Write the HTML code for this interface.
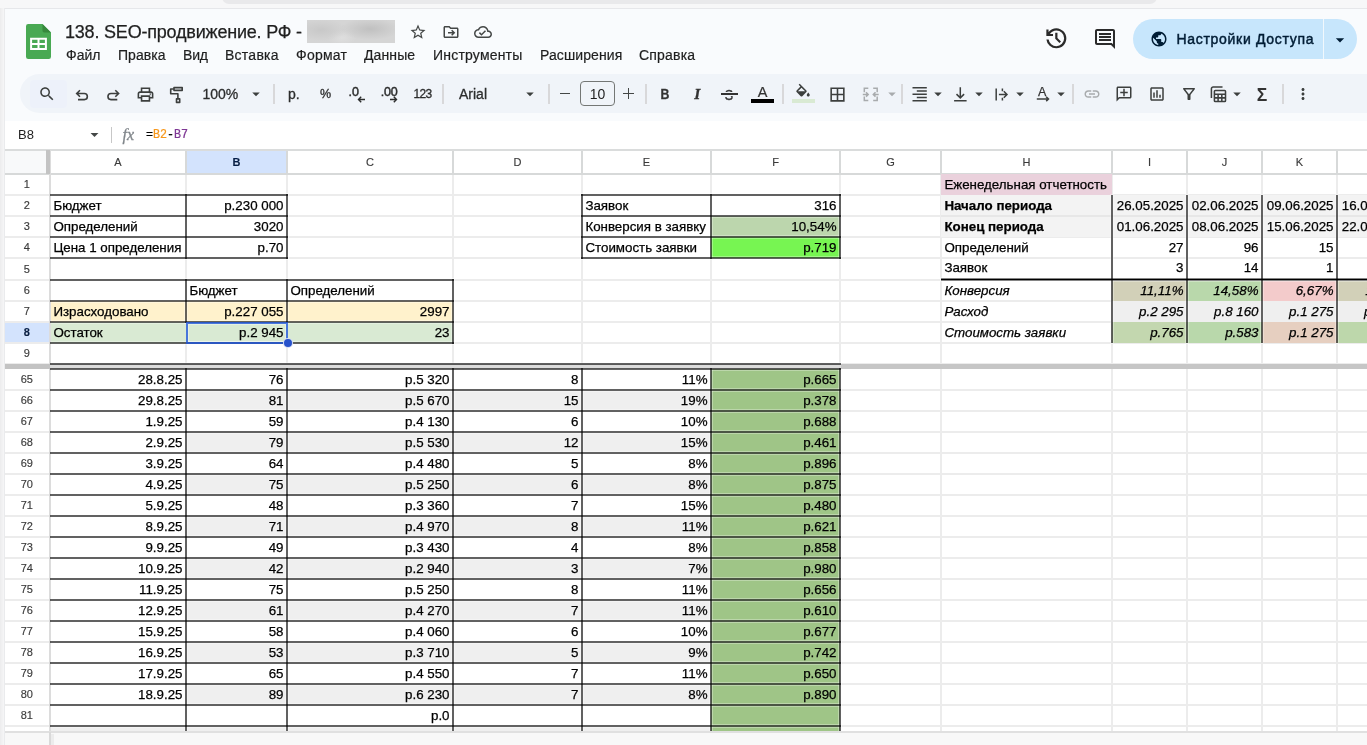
<!DOCTYPE html>
<html lang="ru"><head><meta charset="utf-8"><title>138. SEO-продвижение. РФ</title>
<style>
html,body{margin:0;padding:0}
body{width:1367px;height:745px;overflow:hidden;position:relative;background:#f9fbfd;font-family:"Liberation Sans",sans-serif;color:#000}
#grid{position:absolute;left:0;top:0;width:1367px;height:745px;overflow:hidden;font-size:13.333px;will-change:transform}
.f{position:absolute;display:block}
.t{position:absolute;white-space:nowrap;box-sizing:border-box;padding:0 3px;overflow:hidden;-webkit-text-stroke:.25px}
.t.l{text-align:left;padding-left:3.400px}.t.r{text-align:right;padding-right:3.500px}.t.c{text-align:center;padding:0}
.t.h{font-size:11px;color:#3a3a3a;-webkit-text-stroke:.15px #3a3a3a}
.t.hs{font-weight:bold;color:#041e49}
.t.b{font-weight:bold}.t.it{font-style:italic}
.sel{position:absolute;border:2px solid rgba(30,84,220,.78);box-shadow:inset 0 0 0 1px rgba(255,255,255,.35)}
.dot{position:absolute;width:8px;height:8px;border-radius:50%;background:#2752cb;border:1px solid rgba(255,255,255,.8)}
#strip{position:absolute;left:0;top:0;width:1367px;height:8px;background:#f7f7f8}
#pill{position:absolute;left:222px;top:-10px;width:935px;height:14px;border-radius:7px;background:#e9e9eb}
#stripline{position:absolute;left:4px;top:8px;width:1363px;height:1px;background:#e6e7ea}
#leftshade{position:absolute;left:0;top:8px;width:4px;height:737px;background:linear-gradient(90deg,#ececed,#f6f6f7);border-right:1px solid #eaebed}
#logo{position:absolute;left:26px;top:24px}
#title{position:absolute;left:65px;top:20px;height:24px;line-height:24px;font-size:18px;color:#1f1f1f;white-space:nowrap;letter-spacing:-.2px;-webkit-text-stroke:.25px #1f1f1f}
#blur{position:absolute;left:307px;top:20px;width:88px;height:23px;background:radial-gradient(ellipse 26px 11px at 14px 10px,#c8c8c8,rgba(200,200,200,0) 100%),radial-gradient(ellipse 30px 11px at 63px 9px,#c0c0c0,rgba(192,192,192,0) 100%),radial-gradient(ellipse 14px 8px at 35px 18px,#dedede,rgba(222,222,222,0) 100%),#d5d5d5}
.ic{position:absolute;display:block}
#menu span{position:absolute;top:44.500px;height:20px;line-height:20px;font-size:14px;color:#1f1f1f;white-space:nowrap;-webkit-text-stroke:.2px #1f1f1f}
#share{position:absolute;left:1133px;top:18.500px;width:224px;height:40px;border-radius:20px;background:#c7e6fc}
#sharetxt{position:absolute;left:43.500px;top:0;line-height:40px;font-size:14px;color:#001d35;white-space:nowrap;letter-spacing:.7px;-webkit-text-stroke:.45px #001d35}
#sharediv{position:absolute;left:190px;top:0;width:1px;height:40px;background:#f1f8fd}
#toolbar{position:absolute;left:20px;top:74px;width:1400px;height:39px;border-radius:20px;background:#f0f4f9}
#fbar{position:absolute;left:5px;top:121px;width:1362px;height:29px;background:#fff}
#namebox{position:absolute;left:13px;top:-1px;line-height:29px;font-size:13px;color:#1f1f1f}
#fsep{position:absolute;left:106px;top:6px;width:1px;height:16px;background:#c7c7c7}
#fx{position:absolute;left:117.500px;top:-1px;line-height:29px;font-size:16px;font-style:italic;font-family:"Liberation Serif",serif;color:#80868b;-webkit-text-stroke:.3px #80868b}
#formula{position:absolute;left:141px;top:-1px;line-height:30px;font-size:11.700px;transform:scaleY(1.150);-webkit-text-stroke:.2px;color:#000;font-family:"Liberation Mono","Liberation Sans",monospace}
#formula b{font-weight:normal}
#tbi{position:absolute;left:0;top:0;width:1367px;height:115px;will-change:transform}
#menu,#title,#share,#fbar{will-change:transform}
.tb{position:absolute;top:82px;height:24px;line-height:24px;color:#2c2d2d;white-space:nowrap;-webkit-text-stroke:.3px #2c2d2d}
#fsz{position:absolute;left:580px;top:81px;width:33px;height:23px;border:1px solid #747775;border-radius:4px;text-align:center;line-height:24px;font-size:14px;color:#1f1f1f}
#txt{position:absolute;left:0;top:0;width:1367px;height:732px;overflow:hidden;will-change:transform}
.gl{position:absolute;width:24px;height:24px;line-height:24px;text-align:center;color:#333;white-space:nowrap}

</style></head><body>
<div id="strip"></div><div id="pill"></div><div id="stripline"></div><div id="leftshade"></div>
<svg id="logo" viewBox="0 0 25 35" width="25" height="35"><path d="M2.200 0H16.500L25 8.500V32.800a2.200 2.200 0 0 1-2.200 2.200H2.200A2.200 2.200 0 0 1 0 32.800V2.200A2.200 2.200 0 0 1 2.200 0z" fill="#49a953"/><path d="M16.500 0L25 8.500H18.200a1.700 1.700 0 0 1-1.700-1.700z" fill="#37883d"/><path d="M4.100 13.800v12.100h16.800V13.800zm2 2h5.400v3.100H6.100zm7.400 0h5.400v3.100h-5.400zm-7.400 5.100h5.400v3h-5.400zm7.400 0h5.400v3h-5.400z" fill="#fff"/></svg>
<div id="title">138. SEO-продвижение. РФ -</div>
<div id="blur"></div>
<svg class="ic" style="left:409.400px;top:22.700px" width="18" height="18" viewBox="0 0 24 24"><path fill="#444746" d="M22 9.240l-7.190-.620L12 2 9.190 8.630 2 9.240l5.460 4.730L5.820 21 12 17.270 18.180 21l-1.630-7.030L22 9.240zM12 15.400l-3.760 2.270 1-4.280-3.320-2.880 4.380-.380L12 6.100l1.710 4.040 4.380.380-3.320 2.880 1 4.280L12 15.400z"/></svg>
<svg class="ic" style="left:441.600px;top:23px" width="18" height="18" viewBox="0 0 24 24"><path fill="#444746" d="M20 6h-8l-2-2H4c-1.100 0-2 .900-2 2v12c0 1.100.900 2 2 2h16c1.100 0 2-.900 2-2V8c0-1.100-.900-2-2-2zm0 12H4V6h5.170l2 2H20v10zm-7.840-2.260l1.420 1.420L17.740 13l-4.160-4.160-1.420 1.420L13.910 12H8v2h5.910z"/></svg>
<svg class="ic" style="left:473.500px;top:23px" width="18" height="18" viewBox="0 0 24 24"><path fill="#444746" d="M19.350 10.040C18.670 6.590 15.640 4 12 4 9.110 4 6.600 5.640 5.350 8.040 2.340 8.360 0 10.910 0 14c0 3.310 2.690 6 6 6h13c2.760 0 5-2.240 5-5 0-2.640-2.050-4.780-4.650-4.960zM19 18H6c-2.210 0-4-1.790-4-4 0-2.050 1.530-3.760 3.560-3.970l1.070-.110.500-.950C8.080 7.140 9.940 6 12 6c2.620 0 4.880 1.860 5.390 4.430l.300 1.500 1.530.110c1.560.100 2.780 1.410 2.780 2.960 0 1.650-1.350 3-3 3zm-9-3.820l-2.090-2.090L6.500 13.500 10 17l6.010-6.010-1.410-1.410z"/></svg>
<div id="menu">
<span style="left:66px;letter-spacing:0px">Файл</span><span style="left:118px;letter-spacing:0.05px">Правка</span><span style="left:183px;letter-spacing:-0.2px">Вид</span><span style="left:225px;letter-spacing:0.25px">Вставка</span><span style="left:296px;letter-spacing:0.25px">Формат</span><span style="left:364px;letter-spacing:0.1px">Данные</span><span style="left:433px;letter-spacing:0.2px">Инструменты</span><span style="left:540px;letter-spacing:0.1px">Расширения</span><span style="left:639px;letter-spacing:0.2px">Справка</span>
</div>
<svg class="ic" style="left:1042.700px;top:25px" width="26.700" height="26.700" viewBox="0 0 24 24"><path fill="#2b2b2b" d="M12 21q-3.450 0-6.012-2.287T3.050 13H5.100q.350 2.600 2.313 4.300T12 19q2.925 0 4.963-2.037T19 12t-2.037-4.963T12 5q-1.725 0-3.225.800T6.250 8H9v2H3V4h2v2.350q1.275-1.600 3.113-2.475T12 3q1.875 0 3.513.713t2.850 1.924 1.925 2.850T21 12t-.712 3.513-1.925 2.850-2.850 1.925T12 21m2.800-4.800L11 12.400V7h2v4.600l3.200 3.200z"/></svg>
<svg class="ic" style="left:1093.400px;top:27px" width="24" height="24" viewBox="0 0 24 24"><path fill="#2b2b2b" d="M21.990 4c0-1.100-.890-2-1.990-2H4c-1.100 0-2 .900-2 2v12c0 1.100.900 2 2 2h14l4 4-.010-18zM20 4v13.170L18.830 16H4V4h16zM6 12h12v2H6zm0-3h12v2H6zm0-3h12v2H6z"/></svg>
<div id="share"><svg style="position:absolute;left:17px;top:11px" width="18" height="18" viewBox="0 0 24 24"><path fill="#001d35" d="M12 2C6.480 2 2 6.480 2 12s4.480 10 10 10 10-4.480 10-10S17.520 2 12 2zm-1 17.930c-3.950-.490-7-3.850-7-7.930 0-.620.080-1.210.210-1.790L9 15v1c0 1.100.900 2 2 2v1.930zm6.900-2.540c-.260-.810-1-1.390-1.900-1.390h-1v-3c0-.550-.450-1-1-1H8v-2h2c.550 0 1-.450 1-1V7h2c1.100 0 2-.900 2-2v-.410c2.930 1.190 5 4.060 5 7.410 0 2.080-.800 3.970-2.100 5.390z"/></svg><span id="sharetxt">Настройки Доступа</span><i id="sharediv"></i><svg style="position:absolute;left:197px;top:10.500px" width="20" height="20" viewBox="0 0 24 24"><path fill="#001d35" d="M7 10l5 5 5-5z"/></svg></div>
<div id="toolbar"></div>
<div id="fbar"><span id="namebox">B8</span><svg style="position:absolute;left:80px;top:4px" width="19" height="19" viewBox="0 0 24 24"><path fill="#444746" d="M7 10l5 5 5-5z"/></svg><i id="fsep"></i><span id="fx">fx</span><span id="formula">=<b style="color:#f7981d">B2</b>-<b style="color:#7e3794">B7</b></span></div>
<div id="tbi">
<i class="f" style="left:30px;top:80px;width:37px;height:28px;border-radius:4px;background:#edf1fa"></i>
<svg class="ic" style="left:38.3px;top:85px" width="18" height="18" viewBox="0 0 24 24"><path fill="#3c3f3e" d="M15.500 14h-.790l-.280-.270C15.410 12.590 16 11.110 16 9.500 16 5.910 13.090 3 9.500 3S3 5.910 3 9.500 5.910 16 9.500 16c1.610 0 3.090-.590 4.230-1.570l.270.280v.790l5 4.990L20.490 19l-4.990-5zm-6 0C7.010 14 5 11.990 5 9.500S7.010 5 9.500 5 14 7.010 14 9.500 11.990 14 9.500 14z"/></svg>
<svg class="ic" style="left:72px;top:84px" width="20" height="20" viewBox="72 84 20 20"><path fill="none" stroke="#3c3f3e" stroke-width="1.600" d="M80 90.300L76.700 93.500 80 96.700M76.900 93.500H84.300a3.050 3.050 0 0 1 0 6.100H78"/></svg>
<svg class="ic" style="left:103px;top:84px" width="20" height="20" viewBox="103 84 20 20"><path fill="none" stroke="#3c3f3e" stroke-width="1.600" d="M115.300 90.300L118.600 93.500 115.300 96.700M118.400 93.500H111a3.050 3.050 0 0 0 0 6.100H117.300"/></svg>
<svg class="ic" style="left:135.8px;top:84.7px" width="19" height="19" viewBox="0 0 24 24"><path fill="#3c3f3e" d="M19 8h-1V3H6v5H5c-1.660 0-3 1.340-3 3v6h4v4h12v-4h4v-6c0-1.660-1.340-3-3-3zM8 5h8v3H8V5zm8 14H8v-4h8v4zm4-4h-2v-2H6v2H4v-4c0-.550.450-1 1-1h14c.550 0 1 .450 1 1v4z"/><circle cx="18" cy="11.500" r="1" fill="#444746"/></svg>
<svg class="ic" style="left:166px;top:84px" width="22" height="22" viewBox="166 84 22 22"><path fill="none" stroke="#3c3f3e" stroke-width="1.600" stroke-linejoin="round" d="M174 87.600h8.200v2.800H174zM174 89H170.700v4.700H177.900V98.800M176.500 98.900h3.200v3.500h-3.200z"/></svg>
<span class="tb" style="left:202.500px;font-size:14px">100%</span>
<svg class="ic" style="left:247px;top:85.4px" width="18" height="18" viewBox="0 0 24 24"><path fill="#3c3f3e" d="M7 10l5 5 5-5z"/></svg>
<i class="f" style="left:273px;top:84px;width:2px;height:20px;background:#d8d8da"></i>
<span class="tb" style="left:288px;font-size:14px">р.</span>
<span class="tb" style="left:320px;font-size:12.500px">%</span>
<span class="tb" style="left:348.500px;font-size:12.500px;top:79.500px;-webkit-text-stroke:.45px #2c2d2d">.0</span>
<svg class="ic" style="left:357.3px;top:94.9px" width="9" height="9" viewBox="0 0 9 9"><path fill="none" stroke="#2c2d2d" stroke-width="1.4"  d="M8 4.500H1.500M4.200 1.800L1.500 4.500 4.200 7.200"/></svg>
<span class="tb" style="left:380.700px;font-size:12.500px;top:79.500px;-webkit-text-stroke:.45px #2c2d2d;letter-spacing:-.2px">.00</span>
<svg class="ic" style="left:388.7px;top:94.9px" width="9" height="9" viewBox="0 0 9 9"><path fill="none" stroke="#2c2d2d" stroke-width="1.4"  d="M1 4.500H7.500M4.800 1.800l2.700 2.700L4.800 7.200"/></svg>
<span class="tb" style="left:413.500px;font-size:12px;top:81.500px;letter-spacing:-.65px">123</span>
<i class="f" style="left:442px;top:84px;width:2px;height:20px;background:#d8d8da"></i>
<span class="tb" style="left:459px;font-size:14px">Arial</span>
<svg class="ic" style="left:520.5px;top:84.5px" width="18" height="18" viewBox="0 0 24 24"><path fill="#3c3f3e" d="M7 10l5 5 5-5z"/></svg>
<i class="f" style="left:548px;top:84px;width:2px;height:20px;background:#d8d8da"></i>
<i class="f" style="left:560px;top:92.500px;width:10px;height:1.500px;background:#444746"></i>
<div id="fsz">10</div>
<i class="f" style="left:623px;top:92.500px;width:11px;height:1.500px;background:#444746"></i><i class="f" style="left:627.700px;top:88px;width:1.500px;height:11px;background:#444746"></i>
<i class="f" style="left:645px;top:84px;width:2px;height:20px;background:#d8d8da"></i>
<span class="gl" style="left:653.4px;top:82.3px;font-size:15px;font-weight:bold;transform:scaleX(.82);-webkit-text-stroke:.3px #333">B</span>
<span class="gl" style="left:685.4px;top:82.3px;font-size:15.5px;font-family:Liberation Serif,serif;font-style:italic;font-weight:bold;-webkit-text-stroke:.3px #333">I</span>
<span class="gl" style="left:717.2px;top:82.6px;font-size:15px;transform:scaleX(.84);-webkit-text-stroke:.35px #333">S</span>
<i class="f" style="left:721px;top:93.300px;width:16.500px;height:1.300px;background:#333"></i><i class="f" style="left:725px;top:92.400px;width:8.500px;height:1px;background:#f0f4f9"></i><i class="f" style="left:725px;top:95px;width:8.500px;height:1px;background:#f0f4f9"></i>
<span class="gl" style="left:750.5px;top:80.3px;font-size:14.5px;-webkit-text-stroke:.2px #333">A</span>
<i class="f" style="left:751px;top:99px;width:23px;height:4px;background:#000"></i>
<i class="f" style="left:782px;top:84px;width:2px;height:20px;background:#d8d8da"></i>
<svg class="ic" style="left:794px;top:82.5px" width="18" height="18" viewBox="0 0 24 24"><path fill="#3c3f3e" d="M16.560 9.940L7.620 1 6.210 2.410l2.380 2.380-5.150 5.150c-.590.590-.590 1.540 0 2.120l5.500 5.500c.290.290.680.440 1.060.440s.770-.150 1.060-.440l5.500-5.500c.590-.580.590-1.530 0-2.120zM5.210 11L10 6.210 14.790 11H5.210zM19 12.500s-2 2.170-2 3.500c0 1.100.900 2 2 2s2-.900 2-2c0-1.330-2-3.500-2-3.500z"/></svg>
<i class="f" style="left:792px;top:99px;width:23px;height:4px;background:#d9ead3"></i>
<svg class="ic" style="left:827.5px;top:84.95px" width="19" height="19" viewBox="0 0 24 24"><path fill="#3c3f3e" d="M3 3v18h18V3H3zm8 16H5v-6h6v6zm0-8H5V5h6v6zm8 8h-6v-6h6v6zm0-8h-6V5h6v6z"/></svg>
<svg class="ic" style="left:860px;top:84px" width="22" height="22" viewBox="860 84 22 22"><path fill="none" stroke="#a8abad" stroke-width="1.500" d="M864.300 92.300V88.300H868.300M873.200 88.300H877.200V92.300M877.200 96.600V100.600H873.200M868.300 100.600H864.300V96.600M862.800 94.450H868M866 92.250L868.200 94.450 866 96.650M878.700 94.450H873.500M875.500 92.250L873.300 94.450 875.500 96.650"/></svg>
<svg class="ic" style="left:882.5px;top:85.4px" width="18" height="18" viewBox="0 0 24 24"><path fill="#a8abad" d="M7 10l5 5 5-5z"/></svg>
<i class="f" style="left:901px;top:84px;width:2px;height:20px;background:#d8d8da"></i>
<svg class="ic" style="left:908px;top:84px" width="24" height="22" viewBox="908 84 24 22"><path fill="none" stroke="#3c3f3e" stroke-width="1.4"  d="M912.500 87.700H926.800M916.800 91H926.800M912.500 94.250H926.800M916.800 97.500H926.800M912.500 100.800H926.800"/></svg>
<svg class="ic" style="left:928.5px;top:84.5px" width="18" height="18" viewBox="0 0 24 24"><path fill="#3c3f3e" d="M7 10l5 5 5-5z"/></svg>
<svg class="ic" style="left:950px;top:84px" width="22" height="22" viewBox="950 84 22 22"><path fill="none" stroke="#3c3f3e" stroke-width="1.5"  d="M960.300 87.200V97.600M956.500 94.100L960.300 97.900 964.100 94.100M954.100 100.800H966.600"/></svg>
<svg class="ic" style="left:969.5px;top:84.5px" width="18" height="18" viewBox="0 0 24 24"><path fill="#3c3f3e" d="M7 10l5 5 5-5z"/></svg>
<svg class="ic" style="left:990px;top:84px" width="22" height="22" viewBox="990 84 22 22"><path fill="none" stroke="#3c3f3e" stroke-width="1.5"  d="M996.200 88.500V100.500M1002.400 88.500V91.200M1002.400 97.700V100.500M998.900 94.450H1006.500M1003.800 91.200L1007 94.450 1003.800 97.700"/></svg>
<svg class="ic" style="left:1010.5px;top:84.5px" width="18" height="18" viewBox="0 0 24 24"><path fill="#3c3f3e" d="M7 10l5 5 5-5z"/></svg>
<svg class="ic" style="left:1032px;top:84px" width="22" height="22" viewBox="1032 84 22 22"><path fill="none" stroke="#3c3f3e" stroke-width="1.5"  d="M1036.800 98.900H1048.200M1046.200 96.700L1048.500 98.900 1046.200 101.100"/></svg>
<span class="gl" style="left:1030.15px;top:80.1px;font-size:12.5px;-webkit-text-stroke:.25px #333">A</span>
<svg class="ic" style="left:1051.5px;top:84.5px" width="18" height="18" viewBox="0 0 24 24"><path fill="#3c3f3e" d="M7 10l5 5 5-5z"/></svg>
<i class="f" style="left:1072px;top:84px;width:2px;height:20px;background:#d8d8da"></i>
<svg class="ic" style="left:1083px;top:85.4px" width="18" height="18" viewBox="0 0 24 24"><path fill="#a8abad" d="M3.900 12c0-1.710 1.390-3.100 3.100-3.100h4V7H7c-2.760 0-5 2.240-5 5s2.240 5 5 5h4v-1.900H7c-1.710 0-3.100-1.390-3.100-3.100zM8 13h8v-2H8v2zm9-6h-4v1.900h4c1.710 0 3.100 1.390 3.100 3.100s-1.390 3.100-3.100 3.100h-4V17h4c2.760 0 5-2.240 5-5s-2.240-5-5-5z"/></svg>
<svg class="ic" style="left:1115px;top:85.4px" width="18" height="18" viewBox="0 0 24 24"><g transform="translate(24 0) scale(-1 1)"><path fill="#3c3f3e" d="M22 4c0-1.100-.900-2-2-2H4c-1.100 0-2 .900-2 2v12c0 1.100.900 2 2 2h14l4 4V4zm-2 13.170L18.830 16H4V4h16v13.170zM13 5h-2v4H7v2h4v4h2v-4h4V9h-4z"/></g></svg>
<svg class="ic" style="left:1147.5px;top:85.4px" width="18" height="18" viewBox="0 0 24 24"><path fill="#3c3f3e" d="M19 3H5c-1.100 0-2 .900-2 2v14c0 1.100.900 2 2 2h14c1.100 0 2-.900 2-2V5c0-1.100-.900-2-2-2zm0 16H5V5h14v14zM7 10h2v7H7zm4-3h2v10h-2zm4 6h2v4h-2z"/></svg>
<svg class="ic" style="left:1179.5px;top:85.4px" width="18" height="18" viewBox="0 0 24 24"><path fill="#3c3f3e" d="M7 6h10l-5.010 6.300L7 6zm-2.750-.390C6.270 8.200 10 13 10 13v6c0 .550.450 1 1 1h2c.550 0 1-.450 1-1v-6s3.720-4.800 5.740-7.390c.510-.660.040-1.610-.790-1.610H5.040c-.830 0-1.300.950-.790 1.610z"/></svg>
<svg class="ic" style="left:1207.85px;top:84.05px" width="20.5" height="20.5" viewBox="0 0 24 24"><path fill="none" stroke="#3c3f3e" stroke-width="1.8"  d="M8.500 7.500h11a1 1 0 0 1 1 1v11a1 1 0 0 1-1 1h-11a1 1 0 0 1-1-1v-11a1 1 0 0 1 1-1zM7.500 12h13M7.500 16.250h13M11.830 12v8.500M16.170 12v8.500"/><path fill="none" stroke="#3c3f3e" stroke-width="1.8"  d="M4 16.500V5.500a2 2 0 0 1 2-2H17"/></svg>
<svg class="ic" style="left:1227.5px;top:84.5px" width="18" height="18" viewBox="0 0 24 24"><path fill="#3c3f3e" d="M7 10l5 5 5-5z"/></svg>
<span class="gl" style="left:1250px;top:82.500px;font-size:17.500px;font-weight:bold">Σ</span>
<i class="f" style="left:1282px;top:84px;width:2px;height:20px;background:#d8d8da"></i>
<svg class="ic" style="left:1293.5px;top:85.4px" width="18" height="18" viewBox="0 0 24 24"><path fill="#3c3f3e" d="M12 8c1.100 0 2-.900 2-2s-.900-2-2-2-2 .900-2 2 .900 2 2 2zm0 2c-1.100 0-2 .900-2 2s.900 2 2 2 2-.900 2-2-.900-2-2-2zm0 6c-1.100 0-2 .900-2 2s.900 2 2 2 2-.900 2-2-.900-2-2-2z"/></svg>
</div>

<div id="grid">
<i class="f" style="left:5px;top:150px;width:1362px;height:582px;background:#fff"></i><i class="f" style="left:5px;top:150px;width:41px;height:24px;background:#f8f9fa"></i><i class="f" style="left:186px;top:150px;width:101px;height:24px;background:#d3e3fd"></i><i class="f" style="left:5px;top:322px;width:45px;height:21px;background:#d3e3fd"></i>
<i class="f" style="left:5px;top:194px;width:1362px;height:2px;background:#ececec"></i><i class="f" style="left:5px;top:215px;width:1362px;height:2px;background:#ececec"></i><i class="f" style="left:5px;top:236px;width:1362px;height:2px;background:#ececec"></i><i class="f" style="left:5px;top:257px;width:1362px;height:2px;background:#ececec"></i><i class="f" style="left:5px;top:279px;width:1362px;height:2px;background:#ececec"></i><i class="f" style="left:5px;top:300px;width:1362px;height:2px;background:#ececec"></i><i class="f" style="left:5px;top:321px;width:1362px;height:2px;background:#ececec"></i><i class="f" style="left:5px;top:342px;width:1362px;height:2px;background:#ececec"></i><i class="f" style="left:5px;top:363px;width:1362px;height:2px;background:#ececec"></i><i class="f" style="left:5px;top:389px;width:1362px;height:2px;background:#ececec"></i><i class="f" style="left:5px;top:410px;width:1362px;height:2px;background:#ececec"></i><i class="f" style="left:5px;top:431px;width:1362px;height:2px;background:#ececec"></i><i class="f" style="left:5px;top:452px;width:1362px;height:2px;background:#ececec"></i><i class="f" style="left:5px;top:473px;width:1362px;height:2px;background:#ececec"></i><i class="f" style="left:5px;top:494px;width:1362px;height:2px;background:#ececec"></i><i class="f" style="left:5px;top:515px;width:1362px;height:2px;background:#ececec"></i><i class="f" style="left:5px;top:536px;width:1362px;height:2px;background:#ececec"></i><i class="f" style="left:5px;top:557px;width:1362px;height:2px;background:#ececec"></i><i class="f" style="left:5px;top:578px;width:1362px;height:2px;background:#ececec"></i><i class="f" style="left:5px;top:599px;width:1362px;height:2px;background:#ececec"></i><i class="f" style="left:5px;top:620px;width:1362px;height:2px;background:#ececec"></i><i class="f" style="left:5px;top:641px;width:1362px;height:2px;background:#ececec"></i><i class="f" style="left:5px;top:662px;width:1362px;height:2px;background:#ececec"></i><i class="f" style="left:5px;top:683px;width:1362px;height:2px;background:#ececec"></i><i class="f" style="left:5px;top:704px;width:1362px;height:2px;background:#ececec"></i><i class="f" style="left:5px;top:725px;width:1362px;height:2px;background:#ececec"></i><i class="f" style="left:185px;top:174px;width:2px;height:558px;background:#ececec"></i><i class="f" style="left:286px;top:174px;width:2px;height:558px;background:#ececec"></i><i class="f" style="left:452px;top:174px;width:2px;height:558px;background:#ececec"></i><i class="f" style="left:581px;top:174px;width:2px;height:558px;background:#ececec"></i><i class="f" style="left:710px;top:174px;width:2px;height:558px;background:#ececec"></i><i class="f" style="left:839px;top:174px;width:2px;height:558px;background:#ececec"></i><i class="f" style="left:940px;top:174px;width:2px;height:558px;background:#ececec"></i><i class="f" style="left:1111px;top:174px;width:2px;height:558px;background:#ececec"></i><i class="f" style="left:1186px;top:174px;width:2px;height:558px;background:#ececec"></i><i class="f" style="left:1261px;top:174px;width:2px;height:558px;background:#ececec"></i><i class="f" style="left:1336px;top:174px;width:2px;height:558px;background:#ececec"></i><i class="f" style="left:185px;top:150px;width:2px;height:24px;background:#d7d9d9"></i><i class="f" style="left:286px;top:150px;width:2px;height:24px;background:#d7d9d9"></i><i class="f" style="left:452px;top:150px;width:2px;height:24px;background:#d7d9d9"></i><i class="f" style="left:581px;top:150px;width:2px;height:24px;background:#d7d9d9"></i><i class="f" style="left:710px;top:150px;width:2px;height:24px;background:#d7d9d9"></i><i class="f" style="left:839px;top:150px;width:2px;height:24px;background:#d7d9d9"></i><i class="f" style="left:940px;top:150px;width:2px;height:24px;background:#d7d9d9"></i><i class="f" style="left:1111px;top:150px;width:2px;height:24px;background:#d7d9d9"></i><i class="f" style="left:1186px;top:150px;width:2px;height:24px;background:#d7d9d9"></i><i class="f" style="left:1261px;top:150px;width:2px;height:24px;background:#d7d9d9"></i><i class="f" style="left:1336px;top:150px;width:2px;height:24px;background:#d7d9d9"></i><i class="f" style="left:5px;top:149px;width:1362px;height:2px;background:#dadcdc"></i><i class="f" style="left:5px;top:173px;width:1362px;height:2px;background:#d7d9d9"></i><i class="f" style="left:49px;top:150px;width:2px;height:595px;background:#dcdcdc"></i>
<i class="f" style="left:50px;top:301px;width:403px;height:21px;background:#fff2cc"></i><i class="f" style="left:50px;top:322px;width:403px;height:21px;background:#d9ead3"></i><i class="f" style="left:711px;top:216px;width:129px;height:21px;background:#bcd6ad"></i><i class="f" style="left:711px;top:237px;width:129px;height:21px;background:#77f552"></i><i class="f" style="left:941px;top:174px;width:171px;height:21px;background:#ead1dc"></i><i class="f" style="left:941px;top:195px;width:171px;height:21px;background:#f3f3f3"></i><i class="f" style="left:941px;top:216px;width:171px;height:21px;background:#f3f3f3"></i><i class="f" style="left:1112px;top:195px;width:300px;height:21px;background:#f3f3f3"></i><i class="f" style="left:1112px;top:216px;width:300px;height:21px;background:#f3f3f3"></i><i class="f" style="left:1112px;top:301px;width:300px;height:21px;background:#efefef"></i><i class="f" style="left:1112px;top:280px;width:75px;height:21px;background:#d2d0b8"></i><i class="f" style="left:1112px;top:322px;width:75px;height:21px;background:#c3d7af"></i><i class="f" style="left:1187px;top:280px;width:75px;height:21px;background:#b9d8ab"></i><i class="f" style="left:1187px;top:322px;width:75px;height:21px;background:#b9d8ab"></i><i class="f" style="left:1262px;top:280px;width:75px;height:21px;background:#f3cbcb"></i><i class="f" style="left:1262px;top:322px;width:75px;height:21px;background:#e6cfc0"></i><i class="f" style="left:1337px;top:280px;width:75px;height:21px;background:#d2d0b8"></i><i class="f" style="left:1337px;top:322px;width:75px;height:21px;background:#bdd7ab"></i><i class="f" style="left:186px;top:390px;width:525px;height:21px;background:#efefef"></i><i class="f" style="left:186px;top:432px;width:525px;height:21px;background:#efefef"></i><i class="f" style="left:186px;top:474px;width:525px;height:21px;background:#efefef"></i><i class="f" style="left:186px;top:516px;width:525px;height:21px;background:#efefef"></i><i class="f" style="left:186px;top:558px;width:525px;height:21px;background:#efefef"></i><i class="f" style="left:186px;top:600px;width:525px;height:21px;background:#efefef"></i><i class="f" style="left:186px;top:642px;width:525px;height:21px;background:#efefef"></i><i class="f" style="left:186px;top:684px;width:525px;height:21px;background:#efefef"></i><i class="f" style="left:186px;top:726px;width:525px;height:21px;background:#efefef"></i><i class="f" style="left:50px;top:726px;width:136px;height:21px;background:#efefef"></i><i class="f" style="left:711px;top:369px;width:129px;height:363px;background:#9fc587"></i><i class="f" style="left:941px;top:215px;width:426px;height:2px;background:#e7e7e7"></i>
<i class="f" style="left:49px;top:193px;width:240px;height:4px;background:rgba(255,255,255,.3)"></i><i class="f" style="left:49px;top:214px;width:240px;height:4px;background:rgba(255,255,255,.3)"></i><i class="f" style="left:49px;top:235px;width:240px;height:4px;background:rgba(255,255,255,.3)"></i><i class="f" style="left:49px;top:256px;width:240px;height:4px;background:rgba(255,255,255,.3)"></i><i class="f" style="left:184px;top:193px;width:4px;height:67px;background:rgba(255,255,255,.3)"></i><i class="f" style="left:285px;top:193px;width:4px;height:67px;background:rgba(255,255,255,.3)"></i><i class="f" style="left:580px;top:193px;width:262px;height:4px;background:rgba(255,255,255,.3)"></i><i class="f" style="left:580px;top:214px;width:262px;height:4px;background:rgba(255,255,255,.3)"></i><i class="f" style="left:580px;top:235px;width:262px;height:4px;background:rgba(255,255,255,.3)"></i><i class="f" style="left:580px;top:256px;width:262px;height:4px;background:rgba(255,255,255,.3)"></i><i class="f" style="left:580px;top:193px;width:4px;height:67px;background:rgba(255,255,255,.3)"></i><i class="f" style="left:709px;top:193px;width:4px;height:67px;background:rgba(255,255,255,.3)"></i><i class="f" style="left:838px;top:193px;width:4px;height:67px;background:rgba(255,255,255,.3)"></i><i class="f" style="left:49px;top:278px;width:406px;height:4px;background:rgba(255,255,255,.3)"></i><i class="f" style="left:49px;top:299px;width:406px;height:4px;background:rgba(255,255,255,.3)"></i><i class="f" style="left:49px;top:320px;width:406px;height:4px;background:rgba(255,255,255,.3)"></i><i class="f" style="left:49px;top:341px;width:406px;height:4px;background:rgba(255,255,255,.3)"></i><i class="f" style="left:451px;top:278px;width:4px;height:67px;background:rgba(255,255,255,.3)"></i><i class="f" style="left:184px;top:278px;width:4px;height:46px;background:rgba(255,255,255,.3)"></i><i class="f" style="left:285px;top:278px;width:4px;height:46px;background:rgba(255,255,255,.3)"></i><i class="f" style="left:940px;top:277px;width:428px;height:5px;background:rgba(255,255,255,.3)"></i><i class="f" style="left:940px;top:278px;width:428px;height:3px;background:rgba(255,255,255,.3)"></i><i class="f" style="left:1110px;top:194px;width:4px;height:150px;background:rgba(255,255,255,.3)"></i><i class="f" style="left:1185px;top:194px;width:4px;height:150px;background:rgba(255,255,255,.3)"></i><i class="f" style="left:1260px;top:194px;width:4px;height:150px;background:rgba(255,255,255,.3)"></i><i class="f" style="left:1335px;top:194px;width:4px;height:150px;background:rgba(255,255,255,.3)"></i><i class="f" style="left:49px;top:388px;width:793px;height:4px;background:rgba(255,255,255,.3)"></i><i class="f" style="left:49px;top:409px;width:793px;height:4px;background:rgba(255,255,255,.3)"></i><i class="f" style="left:49px;top:430px;width:793px;height:4px;background:rgba(255,255,255,.3)"></i><i class="f" style="left:49px;top:451px;width:793px;height:4px;background:rgba(255,255,255,.3)"></i><i class="f" style="left:49px;top:472px;width:793px;height:4px;background:rgba(255,255,255,.3)"></i><i class="f" style="left:49px;top:493px;width:793px;height:4px;background:rgba(255,255,255,.3)"></i><i class="f" style="left:49px;top:514px;width:793px;height:4px;background:rgba(255,255,255,.3)"></i><i class="f" style="left:49px;top:535px;width:793px;height:4px;background:rgba(255,255,255,.3)"></i><i class="f" style="left:49px;top:556px;width:793px;height:4px;background:rgba(255,255,255,.3)"></i><i class="f" style="left:49px;top:577px;width:793px;height:4px;background:rgba(255,255,255,.3)"></i><i class="f" style="left:49px;top:598px;width:793px;height:4px;background:rgba(255,255,255,.3)"></i><i class="f" style="left:49px;top:619px;width:793px;height:4px;background:rgba(255,255,255,.3)"></i><i class="f" style="left:49px;top:640px;width:793px;height:4px;background:rgba(255,255,255,.3)"></i><i class="f" style="left:49px;top:661px;width:793px;height:4px;background:rgba(255,255,255,.3)"></i><i class="f" style="left:49px;top:682px;width:793px;height:4px;background:rgba(255,255,255,.3)"></i><i class="f" style="left:49px;top:703px;width:793px;height:4px;background:rgba(255,255,255,.3)"></i><i class="f" style="left:49px;top:724px;width:793px;height:4px;background:rgba(255,255,255,.3)"></i><i class="f" style="left:184px;top:367px;width:4px;height:366px;background:rgba(255,255,255,.3)"></i><i class="f" style="left:285px;top:367px;width:4px;height:366px;background:rgba(255,255,255,.3)"></i><i class="f" style="left:451px;top:367px;width:4px;height:366px;background:rgba(255,255,255,.3)"></i><i class="f" style="left:580px;top:367px;width:4px;height:366px;background:rgba(255,255,255,.3)"></i><i class="f" style="left:709px;top:367px;width:4px;height:366px;background:rgba(255,255,255,.3)"></i><i class="f" style="left:838px;top:367px;width:4px;height:366px;background:rgba(255,255,255,.3)"></i><i class="f" style="left:49px;top:362px;width:793px;height:4px;background:rgba(255,255,255,.3)"></i><i class="f" style="left:49px;top:367px;width:793px;height:4px;background:rgba(255,255,255,.3)"></i>
<i class="f" style="left:50px;top:364px;width:791px;height:5px;background:#dcdcdc"></i><i class="f" style="left:49px;top:174px;width:2px;height:571px;background:#dcdcdc"></i><i class="f" style="left:50px;top:194px;width:238px;height:2px;background:rgba(0,0,0,.6)"></i><i class="f" style="left:50px;top:215px;width:238px;height:2px;background:rgba(0,0,0,.6)"></i><i class="f" style="left:50px;top:236px;width:238px;height:2px;background:rgba(0,0,0,.6)"></i><i class="f" style="left:50px;top:257px;width:238px;height:2px;background:rgba(0,0,0,.6)"></i><i class="f" style="left:185px;top:194px;width:2px;height:65px;background:rgba(0,0,0,.6)"></i><i class="f" style="left:286px;top:194px;width:2px;height:65px;background:rgba(0,0,0,.6)"></i><i class="f" style="left:581px;top:194px;width:260px;height:2px;background:rgba(0,0,0,.6)"></i><i class="f" style="left:581px;top:215px;width:260px;height:2px;background:rgba(0,0,0,.6)"></i><i class="f" style="left:581px;top:236px;width:260px;height:2px;background:rgba(0,0,0,.6)"></i><i class="f" style="left:581px;top:257px;width:260px;height:2px;background:rgba(0,0,0,.6)"></i><i class="f" style="left:581px;top:194px;width:2px;height:65px;background:rgba(0,0,0,.6)"></i><i class="f" style="left:710px;top:194px;width:2px;height:65px;background:rgba(0,0,0,.6)"></i><i class="f" style="left:839px;top:194px;width:2px;height:65px;background:rgba(0,0,0,.6)"></i><i class="f" style="left:50px;top:279px;width:404px;height:2px;background:rgba(0,0,0,.6)"></i><i class="f" style="left:50px;top:300px;width:404px;height:2px;background:rgba(0,0,0,.6)"></i><i class="f" style="left:50px;top:321px;width:404px;height:2px;background:rgba(0,0,0,.6)"></i><i class="f" style="left:50px;top:342px;width:404px;height:2px;background:rgba(0,0,0,.6)"></i><i class="f" style="left:452px;top:279px;width:2px;height:65px;background:rgba(0,0,0,.6)"></i><i class="f" style="left:185px;top:279px;width:2px;height:44px;background:rgba(0,0,0,.6)"></i><i class="f" style="left:286px;top:279px;width:2px;height:44px;background:rgba(0,0,0,.6)"></i><i class="f" style="left:941px;top:278px;width:426px;height:3px;background:#858585"></i><i class="f" style="left:941px;top:279px;width:426px;height:1px;background:#000"></i><i class="f" style="left:1111px;top:195px;width:2px;height:148px;background:rgba(0,0,0,.6)"></i><i class="f" style="left:1186px;top:195px;width:2px;height:148px;background:rgba(0,0,0,.6)"></i><i class="f" style="left:1261px;top:195px;width:2px;height:148px;background:rgba(0,0,0,.6)"></i><i class="f" style="left:1336px;top:195px;width:2px;height:148px;background:rgba(0,0,0,.6)"></i><i class="f" style="left:50px;top:389px;width:791px;height:2px;background:rgba(0,0,0,.6)"></i><i class="f" style="left:50px;top:410px;width:791px;height:2px;background:rgba(0,0,0,.6)"></i><i class="f" style="left:50px;top:431px;width:791px;height:2px;background:rgba(0,0,0,.6)"></i><i class="f" style="left:50px;top:452px;width:791px;height:2px;background:rgba(0,0,0,.6)"></i><i class="f" style="left:50px;top:473px;width:791px;height:2px;background:rgba(0,0,0,.6)"></i><i class="f" style="left:50px;top:494px;width:791px;height:2px;background:rgba(0,0,0,.6)"></i><i class="f" style="left:50px;top:515px;width:791px;height:2px;background:rgba(0,0,0,.6)"></i><i class="f" style="left:50px;top:536px;width:791px;height:2px;background:rgba(0,0,0,.6)"></i><i class="f" style="left:50px;top:557px;width:791px;height:2px;background:rgba(0,0,0,.6)"></i><i class="f" style="left:50px;top:578px;width:791px;height:2px;background:rgba(0,0,0,.6)"></i><i class="f" style="left:50px;top:599px;width:791px;height:2px;background:rgba(0,0,0,.6)"></i><i class="f" style="left:50px;top:620px;width:791px;height:2px;background:rgba(0,0,0,.6)"></i><i class="f" style="left:50px;top:641px;width:791px;height:2px;background:rgba(0,0,0,.6)"></i><i class="f" style="left:50px;top:662px;width:791px;height:2px;background:rgba(0,0,0,.6)"></i><i class="f" style="left:50px;top:683px;width:791px;height:2px;background:rgba(0,0,0,.6)"></i><i class="f" style="left:50px;top:704px;width:791px;height:2px;background:rgba(0,0,0,.6)"></i><i class="f" style="left:50px;top:725px;width:791px;height:2px;background:rgba(0,0,0,.6)"></i><i class="f" style="left:185px;top:368px;width:2px;height:364px;background:rgba(0,0,0,.6)"></i><i class="f" style="left:286px;top:368px;width:2px;height:364px;background:rgba(0,0,0,.6)"></i><i class="f" style="left:452px;top:368px;width:2px;height:364px;background:rgba(0,0,0,.6)"></i><i class="f" style="left:581px;top:368px;width:2px;height:364px;background:rgba(0,0,0,.6)"></i><i class="f" style="left:710px;top:368px;width:2px;height:364px;background:rgba(0,0,0,.6)"></i><i class="f" style="left:839px;top:368px;width:2px;height:364px;background:rgba(0,0,0,.6)"></i><i class="f" style="left:50px;top:363px;width:791px;height:2px;background:rgba(0,0,0,.6)"></i><i class="f" style="left:50px;top:368px;width:791px;height:2px;background:rgba(0,0,0,.6)"></i>
<i class="f" style="left:46px;top:150px;width:4px;height:24px;background:#c3c3c3"></i><i class="f" style="left:5px;top:364px;width:45px;height:5px;background:#c3c3c3"></i><i class="f" style="left:841px;top:364px;width:526px;height:5px;background:#c6c6c6"></i>
<i class="sel" style="left:186px;top:322px;width:98px;height:18px"></i><i class="dot" style="left:282.500px;top:338.400px"></i>
<div id="txt"><div class="t c h" style="left:50px;top:150px;width:136px;height:24px;line-height:24px;">A</div><div class="t c h hs" style="left:186px;top:150px;width:101px;height:24px;line-height:24px;">B</div><div class="t c h" style="left:287px;top:150px;width:166px;height:24px;line-height:24px;">C</div><div class="t c h" style="left:453px;top:150px;width:129px;height:24px;line-height:24px;">D</div><div class="t c h" style="left:582px;top:150px;width:129px;height:24px;line-height:24px;">E</div><div class="t c h" style="left:711px;top:150px;width:129px;height:24px;line-height:24px;">F</div><div class="t c h" style="left:840px;top:150px;width:101px;height:24px;line-height:24px;">G</div><div class="t c h" style="left:941px;top:150px;width:171px;height:24px;line-height:24px;">H</div><div class="t c h" style="left:1112px;top:150px;width:75px;height:24px;line-height:24px;">I</div><div class="t c h" style="left:1187px;top:150px;width:75px;height:24px;line-height:24px;">J</div><div class="t c h" style="left:1262px;top:150px;width:75px;height:24px;line-height:24px;">K</div><div class="t c h" style="left:4px;top:174px;width:45.6px;height:21px;line-height:21px;">1</div><div class="t c h" style="left:4px;top:195px;width:45.6px;height:21px;line-height:21px;">2</div><div class="t c h" style="left:4px;top:216px;width:45.6px;height:21px;line-height:21px;">3</div><div class="t c h" style="left:4px;top:237px;width:45.6px;height:21px;line-height:21px;">4</div><div class="t c h" style="left:4px;top:258px;width:45.6px;height:22px;line-height:22px;">5</div><div class="t c h" style="left:4px;top:280px;width:45.6px;height:21px;line-height:21px;">6</div><div class="t c h" style="left:4px;top:301px;width:45.6px;height:21px;line-height:21px;">7</div><div class="t c h hs" style="left:4px;top:322px;width:45.6px;height:21px;line-height:21px;">8</div><div class="t c h" style="left:4px;top:343px;width:45.6px;height:21px;line-height:21px;">9</div><div class="t c h" style="left:4px;top:369px;width:45.6px;height:21px;line-height:21px;">65</div><div class="t c h" style="left:4px;top:390px;width:45.6px;height:21px;line-height:21px;">66</div><div class="t c h" style="left:4px;top:411px;width:45.6px;height:21px;line-height:21px;">67</div><div class="t c h" style="left:4px;top:432px;width:45.6px;height:21px;line-height:21px;">68</div><div class="t c h" style="left:4px;top:453px;width:45.6px;height:21px;line-height:21px;">69</div><div class="t c h" style="left:4px;top:474px;width:45.6px;height:21px;line-height:21px;">70</div><div class="t c h" style="left:4px;top:495px;width:45.6px;height:21px;line-height:21px;">71</div><div class="t c h" style="left:4px;top:516px;width:45.6px;height:21px;line-height:21px;">72</div><div class="t c h" style="left:4px;top:537px;width:45.6px;height:21px;line-height:21px;">73</div><div class="t c h" style="left:4px;top:558px;width:45.6px;height:21px;line-height:21px;">74</div><div class="t c h" style="left:4px;top:579px;width:45.6px;height:21px;line-height:21px;">75</div><div class="t c h" style="left:4px;top:600px;width:45.6px;height:21px;line-height:21px;">76</div><div class="t c h" style="left:4px;top:621px;width:45.6px;height:21px;line-height:21px;">77</div><div class="t c h" style="left:4px;top:642px;width:45.6px;height:21px;line-height:21px;">78</div><div class="t c h" style="left:4px;top:663px;width:45.6px;height:21px;line-height:21px;">79</div><div class="t c h" style="left:4px;top:684px;width:45.6px;height:21px;line-height:21px;">80</div><div class="t c h" style="left:4px;top:705px;width:45.6px;height:21px;line-height:21px;">81</div><div class="t c h" style="left:4px;top:727px;width:45.600px;height:5px;line-height:16px;overflow:hidden">82</div>
<div class="t l" style="left:50px;top:195px;width:136px;height:21px;line-height:21px;">Бюджет</div><div class="t r" style="left:186px;top:195px;width:101px;height:21px;line-height:21px;">р.230 000</div><div class="t l" style="left:50px;top:216px;width:136px;height:21px;line-height:21px;">Определений</div><div class="t r" style="left:186px;top:216px;width:101px;height:21px;line-height:21px;">3020</div><div class="t l" style="left:50px;top:237px;width:136px;height:21px;line-height:21px;">Цена 1 определения</div><div class="t r" style="left:186px;top:237px;width:101px;height:21px;line-height:21px;">р.70</div><div class="t l" style="left:186px;top:280px;width:101px;height:21px;line-height:21px;">Бюджет</div><div class="t l" style="left:287px;top:280px;width:166px;height:21px;line-height:21px;">Определений</div><div class="t l" style="left:50px;top:301px;width:136px;height:21px;line-height:21px;">Израсходовано</div><div class="t r" style="left:186px;top:301px;width:101px;height:21px;line-height:21px;">р.227 055</div><div class="t r" style="left:287px;top:301px;width:166px;height:21px;line-height:21px;">2997</div><div class="t l" style="left:50px;top:322px;width:136px;height:21px;line-height:21px;">Остаток</div><div class="t r" style="left:186px;top:322px;width:101px;height:21px;line-height:21px;">р.2 945</div><div class="t r" style="left:287px;top:322px;width:166px;height:21px;line-height:21px;">23</div><div class="t l" style="left:582px;top:195px;width:129px;height:21px;line-height:21px;">Заявок</div><div class="t r" style="left:711px;top:195px;width:129px;height:21px;line-height:21px;">316</div><div class="t l" style="left:582px;top:216px;width:129px;height:21px;line-height:21px;">Конверсия в заявку</div><div class="t r" style="left:711px;top:216px;width:129px;height:21px;line-height:21px;">10,54%</div><div class="t l" style="left:582px;top:237px;width:129px;height:21px;line-height:21px;">Стоимость заявки</div><div class="t r" style="left:711px;top:237px;width:129px;height:21px;line-height:21px;">р.719</div><div class="t l" style="left:941px;top:174px;width:171px;height:21px;line-height:21px;">Еженедельная отчетность</div><div class="t l b" style="left:941px;top:195px;width:171px;height:21px;line-height:21px;">Начало периода</div><div class="t l b" style="left:941px;top:216px;width:171px;height:21px;line-height:21px;">Конец периода</div><div class="t l" style="left:941px;top:237px;width:171px;height:21px;line-height:21px;">Определений</div><div class="t l" style="left:941px;top:257px;width:171px;height:21px;line-height:21px;">Заявок</div><div class="t l it" style="left:941px;top:280px;width:171px;height:21px;line-height:21px;">Конверсия</div><div class="t l it" style="left:941px;top:301px;width:171px;height:21px;line-height:21px;">Расход</div><div class="t l it" style="left:941px;top:322px;width:171px;height:21px;line-height:21px;">Стоимость заявки</div><div class="t r" style="left:1112px;top:195px;width:75px;height:21px;line-height:21px;">26.05.2025</div><div class="t r" style="left:1112px;top:216px;width:75px;height:21px;line-height:21px;">01.06.2025</div><div class="t r" style="left:1112px;top:237px;width:75px;height:21px;line-height:21px;">27</div><div class="t r" style="left:1112px;top:257px;width:75px;height:21px;line-height:21px;">3</div><div class="t r it" style="left:1112px;top:280px;width:75px;height:21px;line-height:21px;">11,11%</div><div class="t r it" style="left:1112px;top:301px;width:75px;height:21px;line-height:21px;">р.2 295</div><div class="t r it" style="left:1112px;top:322px;width:75px;height:21px;line-height:21px;">р.765</div><div class="t r" style="left:1187px;top:195px;width:75px;height:21px;line-height:21px;">02.06.2025</div><div class="t r" style="left:1187px;top:216px;width:75px;height:21px;line-height:21px;">08.06.2025</div><div class="t r" style="left:1187px;top:237px;width:75px;height:21px;line-height:21px;">96</div><div class="t r" style="left:1187px;top:257px;width:75px;height:21px;line-height:21px;">14</div><div class="t r it" style="left:1187px;top:280px;width:75px;height:21px;line-height:21px;">14,58%</div><div class="t r it" style="left:1187px;top:301px;width:75px;height:21px;line-height:21px;">р.8 160</div><div class="t r it" style="left:1187px;top:322px;width:75px;height:21px;line-height:21px;">р.583</div><div class="t r" style="left:1262px;top:195px;width:75px;height:21px;line-height:21px;">09.06.2025</div><div class="t r" style="left:1262px;top:216px;width:75px;height:21px;line-height:21px;">15.06.2025</div><div class="t r" style="left:1262px;top:237px;width:75px;height:21px;line-height:21px;">15</div><div class="t r" style="left:1262px;top:257px;width:75px;height:21px;line-height:21px;">1</div><div class="t r it" style="left:1262px;top:280px;width:75px;height:21px;line-height:21px;">6,67%</div><div class="t r it" style="left:1262px;top:301px;width:75px;height:21px;line-height:21px;">р.1 275</div><div class="t r it" style="left:1262px;top:322px;width:75px;height:21px;line-height:21px;">р.1 275</div><div class="t r" style="left:1337px;top:195px;width:75px;height:21px;line-height:21px;">16.06.2025</div><div class="t r" style="left:1337px;top:216px;width:75px;height:21px;line-height:21px;">22.06.2025</div><div class="t r it" style="left:1337px;top:280px;width:75px;height:21px;line-height:21px;">11,11%</div><div class="t r it" style="left:1337px;top:301px;width:75px;height:21px;line-height:21px;">р.2 295</div><div class="t r" style="left:50px;top:369px;width:136px;height:21px;line-height:21px;">28.8.25</div><div class="t r" style="left:186px;top:369px;width:101px;height:21px;line-height:21px;">76</div><div class="t r" style="left:287px;top:369px;width:166px;height:21px;line-height:21px;">р.5 320</div><div class="t r" style="left:453px;top:369px;width:129px;height:21px;line-height:21px;">8</div><div class="t r" style="left:582px;top:369px;width:129px;height:21px;line-height:21px;">11%</div><div class="t r" style="left:711px;top:369px;width:129px;height:21px;line-height:21px;">р.665</div><div class="t r" style="left:50px;top:390px;width:136px;height:21px;line-height:21px;">29.8.25</div><div class="t r" style="left:186px;top:390px;width:101px;height:21px;line-height:21px;">81</div><div class="t r" style="left:287px;top:390px;width:166px;height:21px;line-height:21px;">р.5 670</div><div class="t r" style="left:453px;top:390px;width:129px;height:21px;line-height:21px;">15</div><div class="t r" style="left:582px;top:390px;width:129px;height:21px;line-height:21px;">19%</div><div class="t r" style="left:711px;top:390px;width:129px;height:21px;line-height:21px;">р.378</div><div class="t r" style="left:50px;top:411px;width:136px;height:21px;line-height:21px;">1.9.25</div><div class="t r" style="left:186px;top:411px;width:101px;height:21px;line-height:21px;">59</div><div class="t r" style="left:287px;top:411px;width:166px;height:21px;line-height:21px;">р.4 130</div><div class="t r" style="left:453px;top:411px;width:129px;height:21px;line-height:21px;">6</div><div class="t r" style="left:582px;top:411px;width:129px;height:21px;line-height:21px;">10%</div><div class="t r" style="left:711px;top:411px;width:129px;height:21px;line-height:21px;">р.688</div><div class="t r" style="left:50px;top:432px;width:136px;height:21px;line-height:21px;">2.9.25</div><div class="t r" style="left:186px;top:432px;width:101px;height:21px;line-height:21px;">79</div><div class="t r" style="left:287px;top:432px;width:166px;height:21px;line-height:21px;">р.5 530</div><div class="t r" style="left:453px;top:432px;width:129px;height:21px;line-height:21px;">12</div><div class="t r" style="left:582px;top:432px;width:129px;height:21px;line-height:21px;">15%</div><div class="t r" style="left:711px;top:432px;width:129px;height:21px;line-height:21px;">р.461</div><div class="t r" style="left:50px;top:453px;width:136px;height:21px;line-height:21px;">3.9.25</div><div class="t r" style="left:186px;top:453px;width:101px;height:21px;line-height:21px;">64</div><div class="t r" style="left:287px;top:453px;width:166px;height:21px;line-height:21px;">р.4 480</div><div class="t r" style="left:453px;top:453px;width:129px;height:21px;line-height:21px;">5</div><div class="t r" style="left:582px;top:453px;width:129px;height:21px;line-height:21px;">8%</div><div class="t r" style="left:711px;top:453px;width:129px;height:21px;line-height:21px;">р.896</div><div class="t r" style="left:50px;top:474px;width:136px;height:21px;line-height:21px;">4.9.25</div><div class="t r" style="left:186px;top:474px;width:101px;height:21px;line-height:21px;">75</div><div class="t r" style="left:287px;top:474px;width:166px;height:21px;line-height:21px;">р.5 250</div><div class="t r" style="left:453px;top:474px;width:129px;height:21px;line-height:21px;">6</div><div class="t r" style="left:582px;top:474px;width:129px;height:21px;line-height:21px;">8%</div><div class="t r" style="left:711px;top:474px;width:129px;height:21px;line-height:21px;">р.875</div><div class="t r" style="left:50px;top:495px;width:136px;height:21px;line-height:21px;">5.9.25</div><div class="t r" style="left:186px;top:495px;width:101px;height:21px;line-height:21px;">48</div><div class="t r" style="left:287px;top:495px;width:166px;height:21px;line-height:21px;">р.3 360</div><div class="t r" style="left:453px;top:495px;width:129px;height:21px;line-height:21px;">7</div><div class="t r" style="left:582px;top:495px;width:129px;height:21px;line-height:21px;">15%</div><div class="t r" style="left:711px;top:495px;width:129px;height:21px;line-height:21px;">р.480</div><div class="t r" style="left:50px;top:516px;width:136px;height:21px;line-height:21px;">8.9.25</div><div class="t r" style="left:186px;top:516px;width:101px;height:21px;line-height:21px;">71</div><div class="t r" style="left:287px;top:516px;width:166px;height:21px;line-height:21px;">р.4 970</div><div class="t r" style="left:453px;top:516px;width:129px;height:21px;line-height:21px;">8</div><div class="t r" style="left:582px;top:516px;width:129px;height:21px;line-height:21px;">11%</div><div class="t r" style="left:711px;top:516px;width:129px;height:21px;line-height:21px;">р.621</div><div class="t r" style="left:50px;top:537px;width:136px;height:21px;line-height:21px;">9.9.25</div><div class="t r" style="left:186px;top:537px;width:101px;height:21px;line-height:21px;">49</div><div class="t r" style="left:287px;top:537px;width:166px;height:21px;line-height:21px;">р.3 430</div><div class="t r" style="left:453px;top:537px;width:129px;height:21px;line-height:21px;">4</div><div class="t r" style="left:582px;top:537px;width:129px;height:21px;line-height:21px;">8%</div><div class="t r" style="left:711px;top:537px;width:129px;height:21px;line-height:21px;">р.858</div><div class="t r" style="left:50px;top:558px;width:136px;height:21px;line-height:21px;">10.9.25</div><div class="t r" style="left:186px;top:558px;width:101px;height:21px;line-height:21px;">42</div><div class="t r" style="left:287px;top:558px;width:166px;height:21px;line-height:21px;">р.2 940</div><div class="t r" style="left:453px;top:558px;width:129px;height:21px;line-height:21px;">3</div><div class="t r" style="left:582px;top:558px;width:129px;height:21px;line-height:21px;">7%</div><div class="t r" style="left:711px;top:558px;width:129px;height:21px;line-height:21px;">р.980</div><div class="t r" style="left:50px;top:579px;width:136px;height:21px;line-height:21px;">11.9.25</div><div class="t r" style="left:186px;top:579px;width:101px;height:21px;line-height:21px;">75</div><div class="t r" style="left:287px;top:579px;width:166px;height:21px;line-height:21px;">р.5 250</div><div class="t r" style="left:453px;top:579px;width:129px;height:21px;line-height:21px;">8</div><div class="t r" style="left:582px;top:579px;width:129px;height:21px;line-height:21px;">11%</div><div class="t r" style="left:711px;top:579px;width:129px;height:21px;line-height:21px;">р.656</div><div class="t r" style="left:50px;top:600px;width:136px;height:21px;line-height:21px;">12.9.25</div><div class="t r" style="left:186px;top:600px;width:101px;height:21px;line-height:21px;">61</div><div class="t r" style="left:287px;top:600px;width:166px;height:21px;line-height:21px;">р.4 270</div><div class="t r" style="left:453px;top:600px;width:129px;height:21px;line-height:21px;">7</div><div class="t r" style="left:582px;top:600px;width:129px;height:21px;line-height:21px;">11%</div><div class="t r" style="left:711px;top:600px;width:129px;height:21px;line-height:21px;">р.610</div><div class="t r" style="left:50px;top:621px;width:136px;height:21px;line-height:21px;">15.9.25</div><div class="t r" style="left:186px;top:621px;width:101px;height:21px;line-height:21px;">58</div><div class="t r" style="left:287px;top:621px;width:166px;height:21px;line-height:21px;">р.4 060</div><div class="t r" style="left:453px;top:621px;width:129px;height:21px;line-height:21px;">6</div><div class="t r" style="left:582px;top:621px;width:129px;height:21px;line-height:21px;">10%</div><div class="t r" style="left:711px;top:621px;width:129px;height:21px;line-height:21px;">р.677</div><div class="t r" style="left:50px;top:642px;width:136px;height:21px;line-height:21px;">16.9.25</div><div class="t r" style="left:186px;top:642px;width:101px;height:21px;line-height:21px;">53</div><div class="t r" style="left:287px;top:642px;width:166px;height:21px;line-height:21px;">р.3 710</div><div class="t r" style="left:453px;top:642px;width:129px;height:21px;line-height:21px;">5</div><div class="t r" style="left:582px;top:642px;width:129px;height:21px;line-height:21px;">9%</div><div class="t r" style="left:711px;top:642px;width:129px;height:21px;line-height:21px;">р.742</div><div class="t r" style="left:50px;top:663px;width:136px;height:21px;line-height:21px;">17.9.25</div><div class="t r" style="left:186px;top:663px;width:101px;height:21px;line-height:21px;">65</div><div class="t r" style="left:287px;top:663px;width:166px;height:21px;line-height:21px;">р.4 550</div><div class="t r" style="left:453px;top:663px;width:129px;height:21px;line-height:21px;">7</div><div class="t r" style="left:582px;top:663px;width:129px;height:21px;line-height:21px;">11%</div><div class="t r" style="left:711px;top:663px;width:129px;height:21px;line-height:21px;">р.650</div><div class="t r" style="left:50px;top:684px;width:136px;height:21px;line-height:21px;">18.9.25</div><div class="t r" style="left:186px;top:684px;width:101px;height:21px;line-height:21px;">89</div><div class="t r" style="left:287px;top:684px;width:166px;height:21px;line-height:21px;">р.6 230</div><div class="t r" style="left:453px;top:684px;width:129px;height:21px;line-height:21px;">7</div><div class="t r" style="left:582px;top:684px;width:129px;height:21px;line-height:21px;">8%</div><div class="t r" style="left:711px;top:684px;width:129px;height:21px;line-height:21px;">р.890</div><div class="t r" style="left:287px;top:705px;width:166px;height:21px;line-height:21px;">р.0</div><div class="t r" style="left:287px;top:727px;width:166px;height:5px;line-height:21px;overflow:hidden">р.0</div></div><i class="f" style="left:5px;top:732px;width:1362px;height:13px;background:#f8f8f8"></i><i class="f" style="left:5px;top:731px;width:1362px;height:2px;background:#e0e0e0"></i><i class="f" style="left:49px;top:732px;width:2px;height:13px;background:#d9d9d9"></i><i class="f" style="left:51px;top:734px;width:3px;height:11px;background:#ececec"></i>
</div>
</body></html>
